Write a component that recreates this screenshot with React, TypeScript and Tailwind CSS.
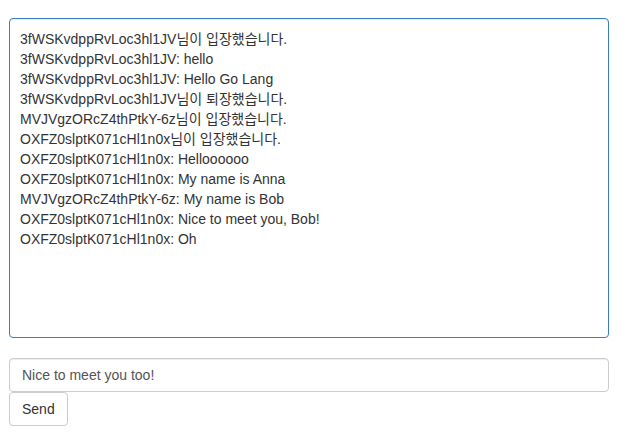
const messages = [
  "3fWSKvdppRvLoc3hl1JV님이 입장했습니다.",
  "3fWSKvdppRvLoc3hl1JV: hello",
  "3fWSKvdppRvLoc3hl1JV: Hello Go Lang",
  "3fWSKvdppRvLoc3hl1JV님이 퇴장했습니다.",
  "MVJVgzORcZ4thPtkY-6z님이 입장했습니다.",
  "OXFZ0slptK071cHl1n0x님이 입장했습니다.",
  "OXFZ0slptK071cHl1n0x: Helloooooo",
  "OXFZ0slptK071cHl1n0x: My name is Anna",
  "MVJVgzORcZ4thPtkY-6z: My name is Bob",
  "OXFZ0slptK071cHl1n0x: Nice to meet you, Bob!",
  "OXFZ0slptK071cHl1n0x: Oh",
];

export default function App() {
  return (
    <div
      className="w-[627px] h-[438px] bg-white pt-[18px] pl-[9px] text-[14px] text-[#333]"
      style={{ fontFamily: '"Liberation Sans", "Noto Sans CJK KR", sans-serif' }}
    >
      <div className="w-[600px]">
        <div className="h-[320px] border border-[#3a7cc0] rounded-[4px] px-[10px] pt-[10px] leading-[20px] shadow-[inset_0_1px_1px_rgba(0,0,0,0.075)]">
          {messages.map((m, i) => (
            <div key={i} className="whitespace-nowrap">
              {m}
            </div>
          ))}
        </div>
        <div className="mt-[20px] h-[34px] border border-[#ccc] rounded-[4px] px-[12px] flex items-center leading-[20px] text-[#555] shadow-[inset_0_1px_1px_rgba(0,0,0,0.075)]">
          Nice to meet you too!
        </div>
        <button className="h-[34px] border border-[#ccc] rounded-[4px] px-[12px] bg-white leading-[20px] text-[#333]">
          Send
        </button>
      </div>
    </div>
  );
}
